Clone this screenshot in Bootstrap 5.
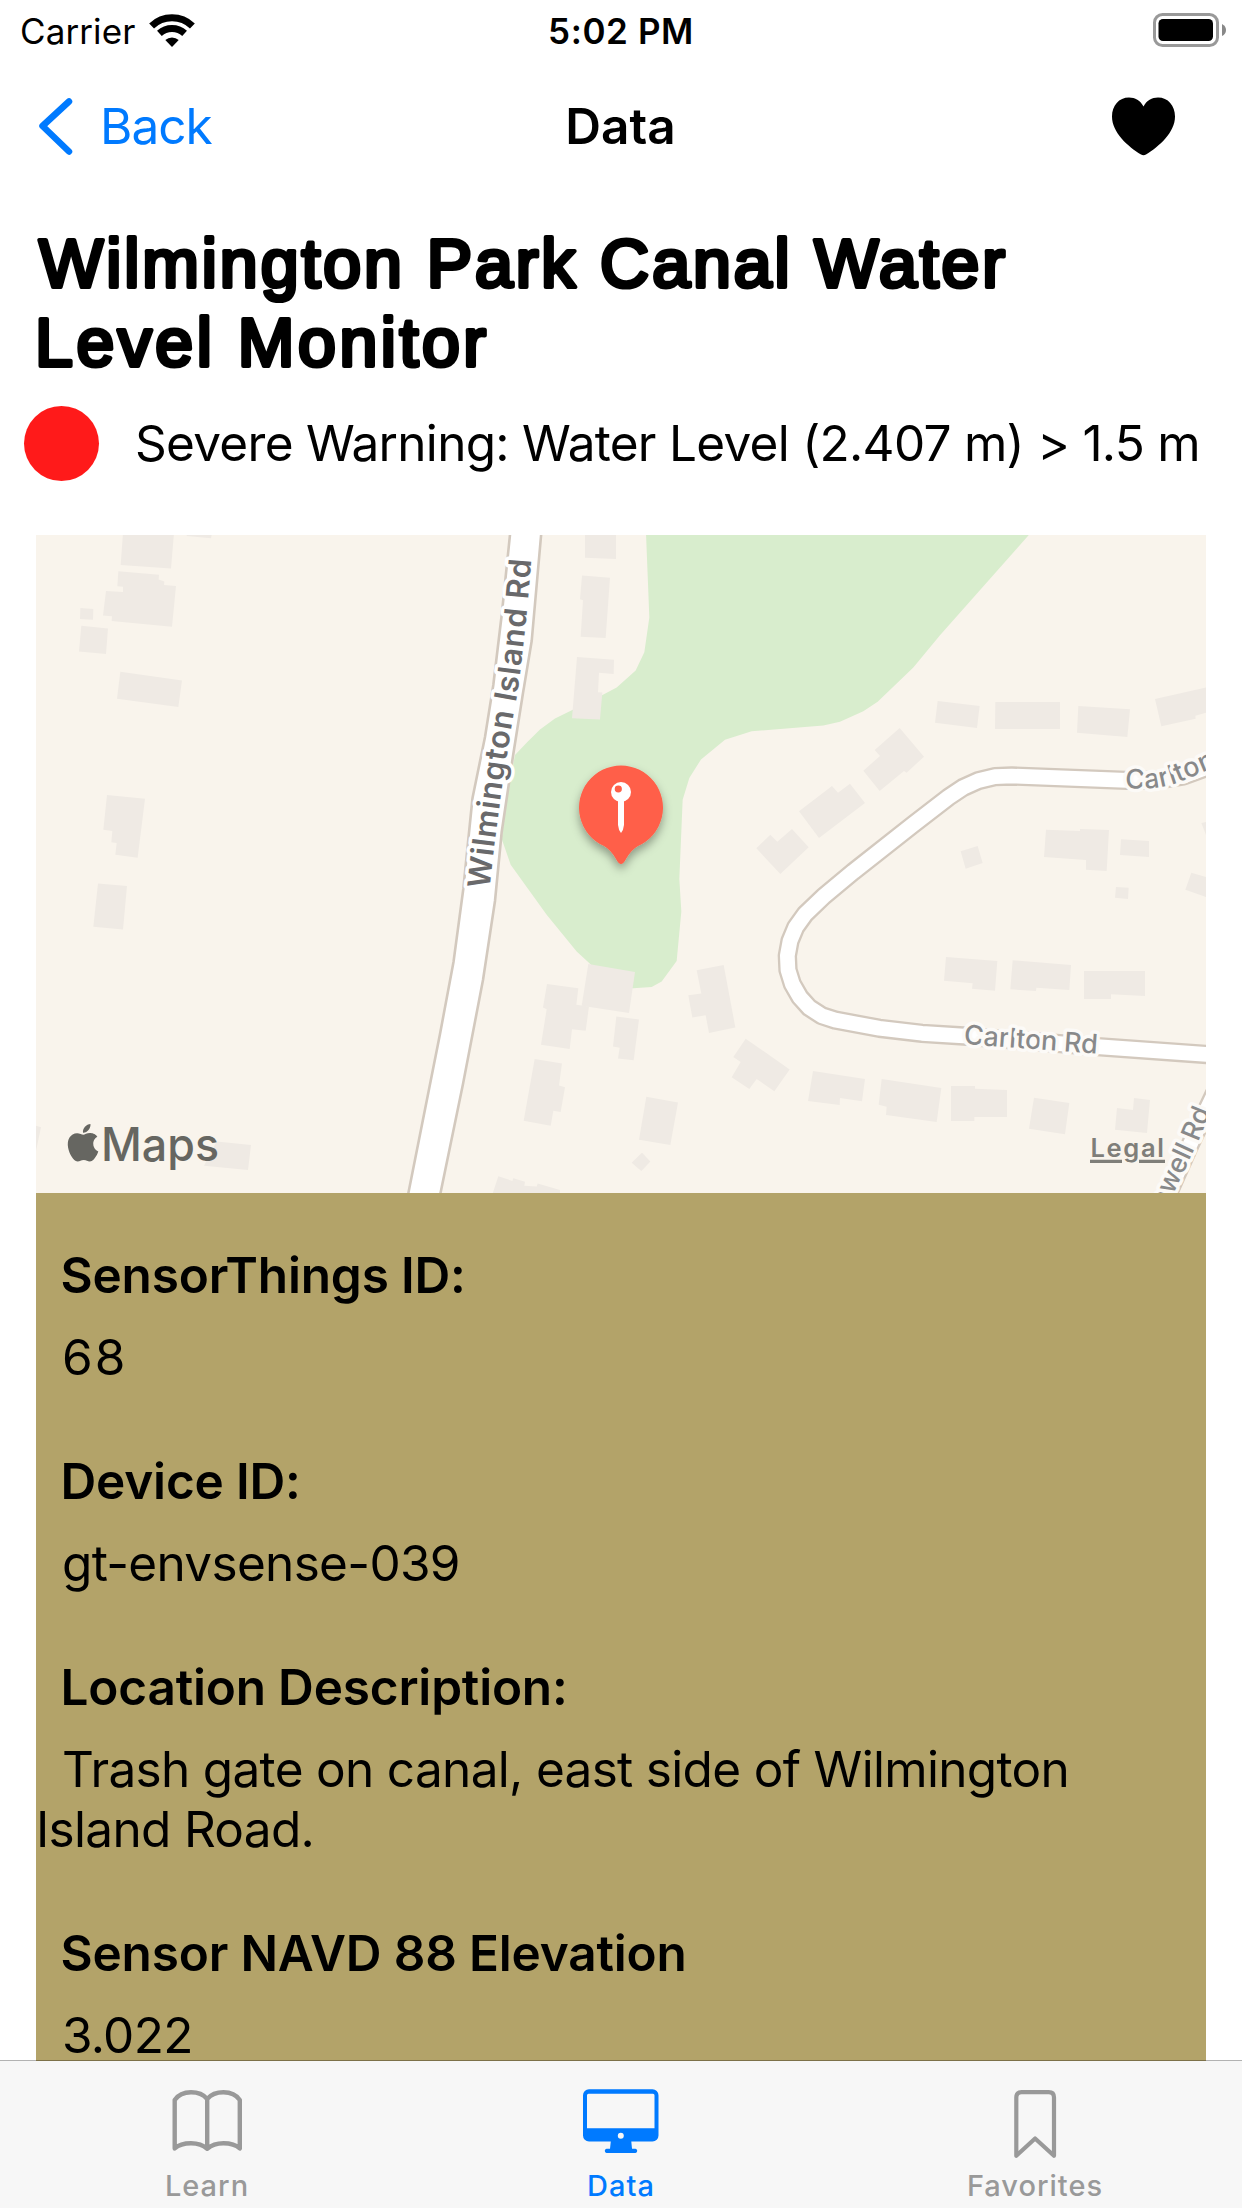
<!DOCTYPE html>
<html lang="en">
<head>
<meta charset="utf-8">
<meta name="viewport" content="width=device-width, initial-scale=1">
<title>Wilmington Park Canal Water Level Monitor</title>
<link href="https://cdn.jsdelivr.net/npm/bootstrap@5.3.0/dist/css/bootstrap.min.css" rel="stylesheet">
<style>
  body { font-family: Inter, "Liberation Sans", sans-serif; color: #000; background: #fff; font-size: 49.5px; }
  svg { display: block; flex: none; }
  .screen { height: 2208px; }
  .status { height: 61px; padding: 1px 20px 0 20px; font-size: 35px; line-height: 60px; letter-spacing: .1px; }
  .status-time { letter-spacing: .6px; }
  .battery { margin-right: -4px; }
  .side { flex: 1 1 0; }
  .topbar { height: 129px; padding: 0 67px 0 38px; line-height: 60px; }
  .back-link { color: #007aff; letter-spacing: -1px; gap: 26px; }
  .alert-row { padding-left: 24px; gap: 36px; height: 75px; letter-spacing: -.71px; white-space: nowrap; }
  .alert-dot { width: 75px; height: 75px; background: #ff1a1a; flex: none; }
  .scroll-area { min-height: 0; }
  .detail { margin: 54px 36px 0; }
  .facts { background: #b3a369; padding-top: 52px; height: 900px; line-height: 60px; }
  .facts dt { font-weight: 600; padding-left: 24.5px; margin-bottom: 22px; letter-spacing: -.18px; }
  .facts dd { text-indent: 26px; margin-bottom: 64px; letter-spacing: -.68px; }
  .facts .num { letter-spacing: 2px; }
  .tabs { height: 148px; margin-top: -1px; background: #f7f7f7; background-clip: padding-box; border-top: 1px solid rgba(0,0,0,.3); z-index: 1; }
  .tab-item { color: #999; font-size: 29px; font-weight: 500; line-height: 36px; letter-spacing: 1px; padding-top: 26px; gap: 9px; text-decoration: none; }
  .tab-item svg { margin-left: -1px; }
  .tab-item.active { color: #007aff; }
  .house { fill: #efeae4; }
  .road-edge { fill: none; stroke: #d3c9be; stroke-width: 58; stroke-linejoin: round; }
  .road-fill { fill: none; stroke: #fff; stroke-width: 44; stroke-linejoin: round; }
  .road-name { font-weight: 500; font-size: 27px; fill: #88898a; stroke: #fcfaf7; stroke-width: 7; stroke-linejoin: round; paint-order: stroke; }
  .road-name.major { font-weight: 600; font-size: 31px; fill: #69696b; stroke: #fff; }
  .headline { font-family: "Liberation Sans", Arial, sans-serif; font-size: 68px; stroke: #000; stroke-width: 4.2px; stroke-linejoin: round; }
</style>
</head>
<body>
<div class="screen d-flex flex-column overflow-hidden">
  <header>
    <div class="status d-flex align-items-center">
      <div class="side d-flex align-items-center">
        <span>Carrier</span>
        <svg style="margin:-2px 0 0 14px" width="46" height="35" viewBox="149 12 46 35" fill="none" stroke="#000" stroke-width="7">
          <path d="M151.6 25A29.5 29.5 0 0 1 192.4 25"/>
          <path d="M159.4 32.4A18.7 18.7 0 0 1 184.6 32.4"/>
          <path d="M172 46L165.3 39A10 10 0 0 1 178.7 39Z" fill="#000" stroke="none"/>
        </svg>
      </div>
      <div class="status-time fw-semibold">5:02 PM</div>
      <div class="side d-flex justify-content-end">
        <svg class="battery" width="74" height="36" viewBox="1152 13 74 36">
          <rect x="1154.5" y="14.5" width="63" height="31" rx="8" fill="none" stroke="#999" stroke-width="3"/>
          <rect x="1158.5" y="19" width="54.5" height="22" rx="4.5"/>
          <path d="M1222 24Q1226 26 1226 30T1222 36Z" fill="#888"/>
        </svg>
      </div>
    </div>
    <nav class="topbar d-flex align-items-center">
      <div class="side">
        <a class="back-link d-flex align-items-center text-decoration-none" href="#">
          <svg width="36" height="60" viewBox="38 95.5 36 60" fill="none" stroke="#007aff" stroke-width="6.5" stroke-linecap="round" stroke-linejoin="round"><path d="M69 101L42.5 125.5L69 151"/></svg>
          Back
        </a>
      </div>
      <div class="fw-semibold ps-4 ms-1">Data</div>
      <div class="side d-flex justify-content-end">
        <svg width="63" height="60" viewBox="1112 96.500 63 60"><path d="M1143.5 107C1140.500 101 1135 98 1129 98C1119 98 1112 106 1112 117C1112 133 1128 147 1141 155Q1143.500 156.500 1146 155C1159 147 1175 133 1175 117C1175 106 1168 98 1158 98C1152 98 1146.500 101 1143.500 107Z"/></svg>
      </div>
    </nav>
  </header>

  <main class="scroll-area flex-grow-1 overflow-hidden">
    <h1 class="m-0">
      <svg width="1242" height="216" viewBox="0 190 1242 216" class="headline">
        <text x="39" y="287" textLength="966">Wilmington Park Canal Water</text>
        <text x="35" y="366" textLength="451">Level Monitor</text>
      </svg>
    </h1>
    <div class="alert-row d-flex align-items-center">
      <span class="alert-dot rounded-circle"></span>
      <span>Severe Warning: Water Level (2.407 m) &gt; 1.5 m</span>
    </div>

    <section class="detail">
      <svg width="1170" height="658" viewBox="36 535 1170 658">
        <defs>
          <filter id="soft" x="-40%" y="-40%" width="180%" height="180%"><feDropShadow dx="0" dy="5" stdDeviation="5" flood-color="#000" flood-opacity=".35"/></filter>
          <path id="islandRd" d="M489.500 889C496 825 507 750 516.500 698C523 655 528 605 532.500 545"/>
          <path id="carltonTop" d="M1125 788Q1158 791 1182 781L1280 740"/>
          <path id="carltonLow" d="M963.500 1044L1110 1054.500"/>
          <path id="cromwell" d="M1166 1210L1201 1135L1222 1084"/>
        </defs>
        <rect x="36" y="535" width="1170" height="658" fill="#f9f4ec"/>

        <!-- park -->
        <g transform="translate(440 520) scale(.33333 .43367)">
          <path fill="#d8edcd" d="M618 30L628 225L613 305L587 347L530 386L486 404L400 437L345 458L300 483L262 512L225 542L205 620L185 735L212 795L320 910L410 995L450 1023L520 1080H580L635 1077L665 1064L710 1017L724 903L718 828L728 645L748 595L783 552L855 507L935 487L1150 474L1200 465L1270 441L1313 419L1420 340L1500 266L1774 28Z"/>
        </g>

        <!-- buildings, west side -->
        <g class="house" transform="translate(30 520) scale(.33333 .43367)">
          <path d="M279 30H432L423 112L272 104Z"/>
          <path d="M470 30H546L543 42L470 37Z"/>
          <path d="M265 118L387 126L386 137L403 142L402 150L438 152L426 246L245 233L246 222L219 220L228 164L279 166V154L262 153Z"/>
          <path d="M151 203L190 205L189 230L150 228ZM154 244L234 250L228 309L147 303ZM271 350L456 370L445 431L261 412Z"/>
          <path d="M231 634L345 643L323 779L256 772L260 745L244 743L247 717L220 714ZM204 838L291 844L279 944L190 938Z"/>
          <path d="M10 1395L33 1400L18 1455L10 1460ZM560 1433L663 1441L654 1499L522 1489Z"/>
        </g>
        <!-- buildings, centre -->
        <g class="house" transform="translate(440 520) scale(.33333 .43367)">
          <path d="M435 30H528V90L435 87ZM426 128L510 133L497 272L422 269L429 185L420 183ZM411 316L522 322L521 355L477 352L474 397L487 398L480 460L396 457Z"/>
          <path d="M445 1024L585 1042L567 1137L425 1120Z"/>
          <path d="M321 1070L415 1080L409 1118L447 1122L437 1178L396 1174L389 1220L303 1210L320 1128L309 1124Z"/>
          <path d="M529 1145L597 1152L581 1246L534 1242L539 1217L519 1214ZM284 1243L366 1253L357 1304L375 1308L362 1365L340 1362L332 1397L251 1385Z"/>
          <path d="M770 1038L851 1026L886 1170L807 1183L797 1142L757 1147L745 1096L784 1092Z"/>
          <path d="M917 1196L1049 1267L1003 1317L950 1289L928 1312L875 1285L902 1250L880 1238Z"/>
          <path d="M619 1330L714 1343L691 1441L597 1429ZM606 1459L631 1479L604 1501L575 1482Z"/>
          <path d="M175 1513L217 1524L220 1518L255 1526L253 1535L290 1537L293 1530L360 1545V1560H155Z"/>
        </g>
        <!-- buildings, north-east -->
        <g class="house" transform="translate(740 520) scale(.33333)">
          <path d="M593 543L719 558L711 624L585 608ZM766 546H960V627H765ZM1015 558L1170 568L1162 651L1011 638ZM1245 537L1410 500V575L1366 587L1367 596L1264 619Z"/>
          <path d="M479 624L552 710L500 758L492 753L419 813L370 752L420 708L404 690ZM276 798L294 818L330 791L375 849L237 954L177 874ZM91 944L112 965L156 927L206 982L121 1062L49 985Z"/>
          <path d="M662 994L713 978L728 1029L677 1046ZM918 929L1020 933V927L1107 930L1100 1053L1038 1049V1020L912 1011ZM1143 958L1227 963V1011L1140 1005ZM1128 1101L1166 1103L1164 1137L1125 1133ZM1354 1058L1410 1075V1135L1336 1109ZM1384 909L1410 903V950H1400Z"/>
        </g>
        <!-- buildings, south-east -->
        <g class="house" transform="translate(740 880) scale(.33333)">
          <path d="M618 231L772 243L765 332L696 326L698 310L612 302ZM818 241L993 255L988 330L889 323L888 333L811 328ZM1032 273H1215V348L1113 343V357H1032Z"/>
          <path d="M219 573L375 597L366 664L300 654L299 675L204 663ZM425 597L604 624L590 726L438 705L440 680L416 674ZM633 618H705V626L801 630V711H703V723H633ZM882 653L988 669L975 763L867 746ZM1182 654L1230 660L1221 759L1125 749L1131 684L1179 690Z"/>
        </g>

        <!-- roads -->
        <g transform="translate(740 520) scale(.33333)">
          <path class="road-edge" d="M1420 735L1330 768L1250 781L1160 781L815 768L765 770L715 782L670 802L625 832L520 913L340 1055L250 1130L195 1183L167 1222L150 1263L142 1307L144 1350L157 1392L180 1432L208 1463L245 1487L285 1500L418 1525L546 1540L671 1548L1072 1580L1420 1605"/>
          <path class="road-fill" d="M1420 735L1330 768L1250 781L1160 781L815 768L765 770L715 782L670 802L625 832L520 913L340 1055L250 1130L195 1183L167 1222L150 1263L142 1307L144 1350L157 1392L180 1432L208 1463L245 1487L285 1500L418 1525L546 1540L671 1548L1072 1580L1420 1605"/>
          <path class="road-edge" d="M1272 2050L1352 1870L1438 1690"/>
          <path class="road-fill" d="M1272 2050L1352 1870L1438 1690"/>
        </g>
        <path fill="#fff" stroke="#d3c9be" stroke-width="2.600" stroke-linejoin="round" d="M511 525L501.700 615L493.300 685L485 737L472.500 798L463.300 889L453.500 962L440 1034L405 1210H437L463 1084L483 980L495 901L501.700 832L513 756L523 693L531.700 641L542 525Z"/>

        <text class="road-name major" textLength="332"><textPath href="#islandRd">Wilmington Island Rd</textPath></text>
        <text class="road-name" letter-spacing=".2"><textPath href="#carltonTop">Carlton Rd</textPath></text>
        <text class="road-name" letter-spacing="-.2"><textPath href="#carltonLow">Carlton Rd</textPath></text>
        <text class="road-name"><textPath href="#cromwell">nwell Rd</textPath></text>

        <!-- pin -->
        <path fill="#ff5e48" filter="url(#soft)" d="M621 864Q618.500 864 616 859Q611 850 604 846A42 42 0 1 1 638 846Q631 850 626 859Q623.500 864 621 864Z"/>
        <circle cx="621" cy="792" r="10" fill="#fff"/>
        <path d="M618 800H624V825Q623.500 830 621 833Q618.500 830 618 825Z" fill="#fff"/>
        <ellipse cx="618.300" cy="789" rx="3.600" ry="3.400" fill="#ff5e48"/>

        <!-- attribution -->
        <g fill="#666661">
          <path transform="translate(64.300 1124) scale(1.560)" d="M12.152 6.896c-.948 0-2.415-1.078-3.960-1.040-2.040.027-3.910 1.183-4.961 3.014-2.117 3.675-.546 9.103 1.519 12.090 1.013 1.454 2.208 3.090 3.792 3.039 1.520-.065 2.090-.987 3.935-.987 1.831 0 2.350.987 3.960.948 1.637-.026 2.676-1.480 3.676-2.948 1.156-1.688 1.636-3.325 1.662-3.415-.039-.013-3.182-1.221-3.220-4.857-.026-3.040 2.480-4.494 2.597-4.559-1.429-2.090-3.623-2.324-4.390-2.376-2-.156-3.675 1.090-4.610 1.090zM15.530 3.830c.843-1.012 1.400-2.427 1.245-3.830-1.207.052-2.662.805-3.532 1.818-.780.896-1.454 2.338-1.273 3.714 1.338.104 2.715-.688 3.559-1.701"/>
          <text x="101" y="1161" font-size="46" font-weight="500" textLength="118" lengthAdjust="spacingAndGlyphs">Maps</text>
        </g>
        <g fill="#7f7e79">
          <text x="1090.500" y="1156.500" font-size="25.500" font-weight="600" textLength="73.500">Legal</text>
          <path d="M1090 1159.700H1122V1163H1090ZM1139 1159.700H1165V1163H1139Z"/>
        </g>
      </svg>

      <dl class="facts m-0">
        <dt>SensorThings ID:</dt>
        <dd class="num">68</dd>
        <dt>Device ID:</dt>
        <dd>gt-envsense-039</dd>
        <dt>Location Description:</dt>
        <dd>Trash gate on canal, east side of Wilmington Island Road.</dd>
        <dt>Sensor NAVD 88 Elevation</dt>
        <dd>3.022</dd>
      </dl>
    </section>
  </main>

  <footer class="tabs position-relative d-flex flex-shrink-0">
    <a class="tab-item col-4 d-flex flex-column align-items-center" href="#">
      <svg width="76" height="72" viewBox="168 2087 76 72" fill="none" stroke="#999" stroke-width="4.400" stroke-linecap="round" stroke-linejoin="round">
        <path d="M206.200 2099C202 2094 196 2092.300 190 2092.300S177.500 2094.500 173.700 2100V2148.500C178 2144.500 184 2143.300 190 2143.300S202 2145 206.200 2148.800C210.500 2145 216 2143.300 222.500 2143.300S234.500 2144.500 238.800 2148.500V2100C235 2094.500 228.500 2092.300 222.500 2092.300S210.500 2094 206.200 2099V2148.800"/>
      </svg>
      Learn
    </a>
    <a class="tab-item active col-4 d-flex flex-column align-items-center" href="#">
      <svg width="78" height="72" viewBox="581 2087 78 72" fill="#007aff">
        <path fill-rule="evenodd" d="M588 2089.300H651.500A6 6 0 0 1 657.500 2095.300V2135.500A6 6 0 0 1 651.500 2141.500H630.300L631 2148.700H634.500A2.200 2.200 0 0 1 634.500 2153H605.500A2.200 2.200 0 0 1 605.500 2148.700H609L609.800 2141.500H588A6 6 0 0 1 582 2135.500V2095.300A6 6 0 0 1 588 2089.300ZM587.500 2093.700A1.500 1.500 0 0 0 586 2095.200V2128.300H653.500V2095.200A1.500 1.500 0 0 0 652 2093.700ZM619.800 2132.800A3 3 0 1 0 619.800 2138.800A3 3 0 1 0 619.800 2132.800Z"/>
      </svg>
      Data
    </a>
    <a class="tab-item col-4 d-flex flex-column align-items-center" href="#">
      <svg width="48" height="72" viewBox="1010 2087 48 72" fill="none" stroke="#999" stroke-width="4.200" stroke-linejoin="round">
        <path d="M1015.300 2097.500Q1015.300 2092.200 1020.600 2092.200H1047.700Q1053 2092.200 1053 2097.500V2155.800L1034.100 2138.500L1015.300 2155.800Z"/>
      </svg>
      Favorites
    </a>
  </footer>
</div>
<script src="https://cdn.jsdelivr.net/npm/bootstrap@5.3.0/dist/js/bootstrap.bundle.min.js"></script>
</body>
</html>
